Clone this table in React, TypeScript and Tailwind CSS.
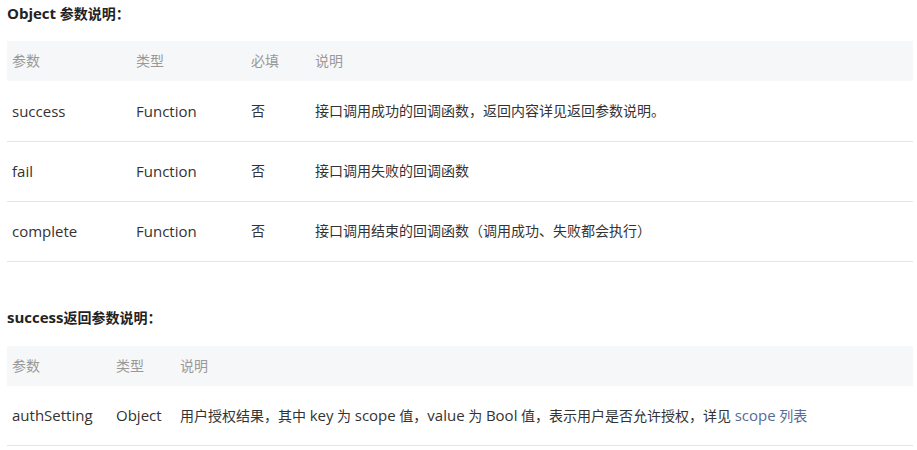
const font = { fontFamily: '"Open Sans", "Noto Sans CJK SC", sans-serif' };

const objectRows = [
  { name: "success", type: "Function", required: "否", desc: "接口调用成功的回调函数，返回内容详见返回参数说明。" },
  { name: "fail", type: "Function", required: "否", desc: "接口调用失败的回调函数" },
  { name: "complete", type: "Function", required: "否", desc: "接口调用结束的回调函数（调用成功、失败都会执行）" },
];

// latin runs are set a touch larger so they match the reference's widths
function L({ children }: { children: React.ReactNode }) {
  return <span className="text-[15px] leading-[20px]">{children}</span>;
}

function Heading({ children }: { children: React.ReactNode }) {
  return <h4 className="h-[28px] text-[14px] font-bold text-[#222] leading-[28px]">{children}</h4>;
}

export default function App() {
  return (
    <div className="w-[917px] h-[450px] bg-white px-[7px] text-[14px] leading-[20px] text-[#333] overflow-hidden" style={font}>
      <Heading>
        <L>Object</L> 参数说明：
      </Heading>
      <table className="mt-[13px] w-[906px] border-collapse">
        <thead>
          <tr className="bg-[#f6f7f8] h-[40px] text-[#999] text-left">
            <th className="w-[124px] pl-[5px] font-normal">参数</th>
            <th className="w-[115px] pl-[5px] font-normal">类型</th>
            <th className="w-[64px] pl-[5px] font-normal">必填</th>
            <th className="pl-[5px] font-normal">说明</th>
          </tr>
        </thead>
        <tbody>
          {objectRows.map((r) => (
            <tr key={r.name} className="h-[60px] border-b border-[#e5e5e5]">
              <td className="pl-[5px] text-[15px]">{r.name}</td>
              <td className="pl-[5px] text-[15px]">{r.type}</td>
              <td className="pl-[5px]">{r.required}</td>
              <td className="pl-[5px]">{r.desc}</td>
            </tr>
          ))}
        </tbody>
      </table>

      <div className="mt-[42px]">
        <Heading>
          <L>success</L>返回参数说明：
        </Heading>
      </div>
      <table className="mt-[14px] w-[906px] border-collapse">
        <thead>
          <tr className="bg-[#f6f7f8] h-[40px] text-[#999] text-left">
            <th className="w-[104px] pl-[5px] font-normal">参数</th>
            <th className="w-[64px] pl-[5px] font-normal">类型</th>
            <th className="pl-[5px] font-normal">说明</th>
          </tr>
        </thead>
        <tbody>
          <tr className="h-[60px] border-b border-[#e5e5e5]">
            <td className="pl-[5px] text-[15px]">authSetting</td>
            <td className="pl-[5px] text-[15px]">Object</td>
            <td className="pl-[5px]">
              用户授权结果，其中 <L>key</L> 为 <L>scope</L> 值，<L>value</L> 为 <L>Bool</L> 值，表示用户是否允许授权，详见{" "}
              <a className="text-[#576b95]" href="#">
                <L>scope</L> 列表
              </a>
            </td>
          </tr>
        </tbody>
      </table>
    </div>
  );
}
